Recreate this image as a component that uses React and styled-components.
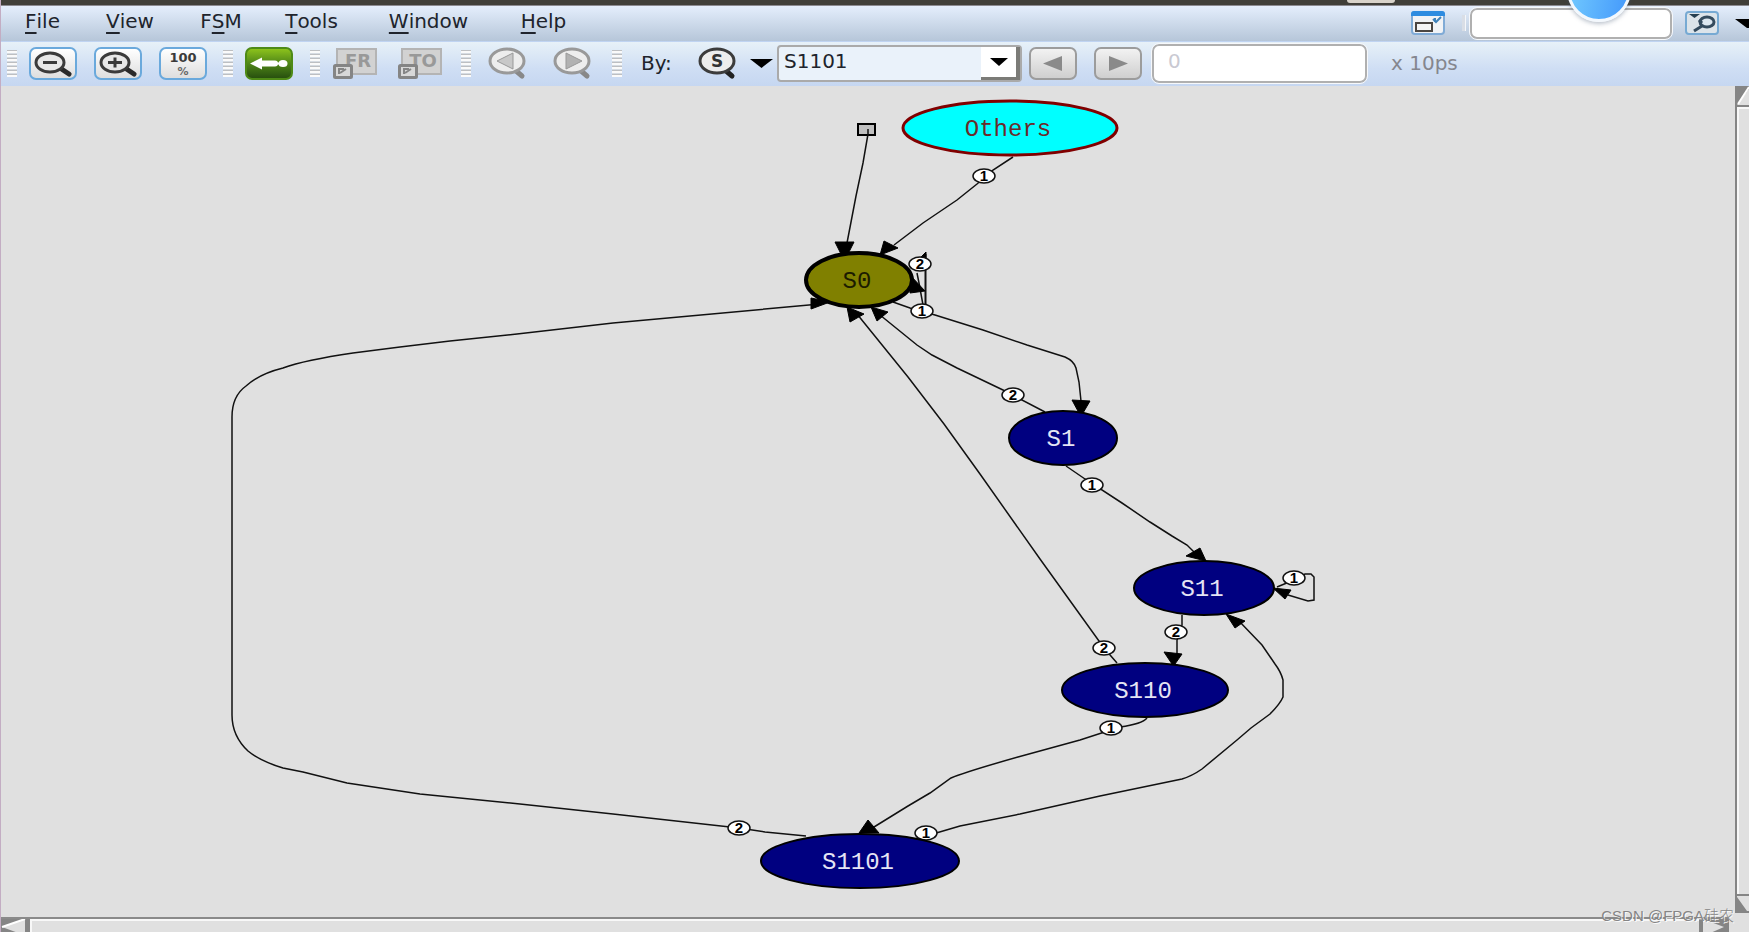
import React from 'react';
import styled, { createGlobalStyle } from 'styled-components';

const Global = createGlobalStyle`
  * { box-sizing: border-box; }
  html, body { margin: 0; }
  body { font-family: "DejaVu Sans", sans-serif; font-size: 20px; color: #20242c; }
`;

const Window = styled.div`
  position: relative;
  display: flex;
  flex-direction: column;
  height: 100vh;
  overflow: hidden;
  background: #e0e0e0;
  border-left: 1px solid #c3adc3;
`;
const DesktopStrip = styled.div`
  flex: none;
  height: 6px;
  display: flex;
  justify-content: flex-end;
  background: #403f39;
  border-bottom: 1px solid #8b8a90;
`;
const StripTab = styled.span`
  width: 48px;
  height: 3px;
  margin-right: 354px;
  border-radius: 0 0 4px 4px;
  background: #d8d3ca;
`;
const MenuBar = styled.header`
  flex: none;
  height: 36px;
  display: flex;
  align-items: center;
  justify-content: space-between;
  padding-left: 19px;
  background: linear-gradient(#e4eefc, #b6c6d9);
  border-bottom: 1px solid #c0d4f2;
`;
const Menus = styled.nav`
  display: grid;
  grid-template-columns: 45px 66px 52px 65px 105px 61px;
  column-gap: 32px;
`;
const MenuButton = styled.button`
  display: flex;
  justify-content: center;
  padding: 0 0 6px;
  border: 0;
  background: none;
  font: inherit;
  line-height: 24px;
  color: inherit;
  white-space: pre;
`;
const Mnemonic = styled.span`
  text-decoration: underline;
  text-decoration-thickness: 2px;
  text-underline-offset: 4px;
`;
const SearchTools = styled.div`
  display: flex;
  align-items: center;
  align-self: stretch;
  padding-bottom: 1px;
  overflow: hidden;
`;
const PlainButton = styled.button`
  flex: none;
  display: flex;
  padding: 0;
  border: 0;
  background: none;
  margin-left: ${(p) => p.$gap || 0}px;
`;
const Divider = styled.span`
  width: 4px;
  height: 16px;
  margin: 0 4px 0 17px;
  background: #d9dee6;
  border-right: 1px solid #f5f7fa;
`;
const Field = styled.input`
  flex: none;
  width: ${(p) => p.$width}px;
  height: ${(p) => p.$height}px;
  padding: 0 14px 4px;
  border: 2px solid #b0b0b0;
  border-radius: 7px;
  outline: 1px solid #f6f8fb;
  background: #fff;
  font: inherit;
  color: #c9c9d2;
`;
const ToolBar = styled.div`
  flex: none;
  height: 44px;
  display: flex;
  align-items: center;
  padding: 0 0 2px 6px;
  white-space: nowrap;
  background: linear-gradient(#e7f1f8, #cfdef4 60%, #c6d7f1);
`;
const Group = styled.div`
  display: flex;
  align-items: center;
  gap: ${(p) => p.$gap || 17}px;
  margin-right: ${(p) => p.$after || 0}px;
`;
const Grip = styled.span`
  flex: none;
  width: 10px;
  height: 27px;
  margin-right: ${(p) => p.$after}px;
  background: repeating-linear-gradient(#bdbfc2 0 1px, #fafafa 1px 3px, #d5dbe2 3px 4px);
`;
const ToolButton = styled.button`
  flex: none;
  display: flex;
  align-items: center;
  justify-content: center;
  width: 48px;
  height: 33px;
  padding: 0;
  border: 2px solid ${(p) => (p.$grey ? '#9c9c9c' : '#6aa9dc')};
  border-radius: 7px;
  background: ${(p) => (p.$grey ? 'linear-gradient(#f2f2f2, #cfcfcf)' : 'linear-gradient(#ffffff, #dedede)')};
`;
const RunButton = styled(ToolButton)`
  border-color: #4e8a16;
  background: linear-gradient(#8cc21c, #4f8618 50%, #28500f);
`;
const ByLabel = styled.label`
  width: 40px;
  margin-right: 17px;
`;
const Combo = styled.div`
  flex: none;
  display: flex;
  width: 245px;
  height: 37px;
  margin: 0 7px 0 4px;
  border: 2px solid #aaa;
  border-radius: 4px;
  background: #eaf2fa;
`;
const ComboSelect = styled.select`
  flex: 1;
  appearance: none;
  padding: 0 0 4px 5px;
  border: 0;
  background: none;
  font: inherit;
  color: inherit;
`;
const ComboArrow = styled.span`
  width: 39px;
  display: flex;
  align-items: center;
  justify-content: center;
  background: #fff;
  border: solid #7b7b77;
  border-width: 0 4px 3px 0;
  pointer-events: none;
`;
const Unit = styled.span`
  margin-left: 24px;
  color: #85868e;
`;
const Viewport = styled.main`
  flex: 1;
  min-height: 0;
  display: grid;
  grid-template-columns: minmax(0, 1fr) 14px;
`;
const Diagram = styled.svg`
  display: block;
  width: 100%;
  height: 100%;
  min-height: 0;
  font-family: "Liberation Mono", monospace;
  font-size: 24px;
  text-anchor: middle;
`;
const VScroll = styled.div`
  display: flex;
  flex-direction: column;
  margin-bottom: 4px;
  border-left: 2px solid #858585;
  overflow: hidden;
`;
const VThumb = styled.div`
  flex: 1;
  border: solid #858585;
  border-width: 2px 0;
  box-shadow: inset 2px 2px #f8f8f8;
`;
const HScroll = styled.div`
  flex: none;
  display: flex;
  height: 15px;
  margin-right: 20px;
  border-top: 2px solid #8a8a8a;
  overflow: hidden;
`;
const HThumb = styled.div`
  flex: 1;
  border: solid #858585;
  border-width: 0 4px 0 2px;
  box-shadow: inset 2px 2px #f8f8f8;
`;
const Bubble = styled.div`
  position: absolute;
  top: -42px;
  right: 118px;
  width: 64px;
  height: 64px;
  border: 3px solid #f3f8fd;
  border-radius: 50%;
  background: linear-gradient(100deg, #74ccff, #4398fb);
  box-shadow: 0 2px 4px rgba(60, 80, 110, 0.35);
`;
const Watermark = styled.div`
  position: absolute;
  right: 15px;
  bottom: 6px;
  font: 300 15px/20px "Liberation Sans", "Noto Sans CJK SC", sans-serif;
  color: #858585;
  text-shadow: 1px 1px #fafafa;
`;

function Caret({ w = 24, h = 9 }) {
  return (
    <svg width={w} height={h} viewBox="0 0 24 9" preserveAspectRatio="none">
      <path d="M0 0H24L12 9Z" fill="#000" />
    </svg>
  );
}

function ZoomIcon({ plus }) {
  return (
    <svg width="40" height="27" viewBox="0 0 40 27">
      <path d="M27 18L36 24" stroke="#2a2a2a" strokeWidth="5" strokeLinecap="round" />
      <ellipse cx="17" cy="12.500" rx="14" ry="9.500" fill="#e8e8e8" stroke="#3b3b3b" strokeWidth="3" />
      <path d={plus ? 'M10 12.500H24M17 7.500V17.500' : 'M10 12.500H24'} stroke="#3b3b3b" strokeWidth="3" />
    </svg>
  );
}

function PercentIcon() {
  return (
    <svg width="40" height="29" viewBox="0 0 40 29" fontFamily="DejaVu Sans" textAnchor="middle">
      <text x="20" y="13" fontSize="13" fontWeight="bold" fill="#3a3a3a">100</text>
      <text x="20" y="26" fontSize="11" fontWeight="bold" fill="#6a6a6a">%</text>
    </svg>
  );
}

function GoToIcon({ label }) {
  return (
    <svg width="44" height="32" viewBox="0 0 44 32">
      <rect x="4" y="2" width="39" height="25" fill="#d2d2d2" stroke="#b4b4b4" strokeWidth="2" />
      <text x="25" y="20" fontFamily="DejaVu Sans" fontSize="18" fontWeight="bold" fill="#999" textAnchor="middle">{label}</text>
      <rect x="1.500" y="18.500" width="17" height="12" rx="1" fill="#d8d8d8" stroke="#858585" strokeWidth="3" />
      <path d="M6 27V22H11M7 26L13 22" stroke="#858585" strokeWidth="2" fill="none" />
    </svg>
  );
}

function LensIcon({ kind }) {
  const dark = kind === 'state';
  const ink = dark ? '#3c3c3c' : '#999';
  return (
    <svg width="39" height="33" viewBox="0 0 39 33">
      <path d="M27 23L34 29" stroke={dark ? '#222' : '#888'} strokeWidth="5" strokeLinecap="round" />
      <ellipse cx="19" cy="14" rx="17" ry="12" fill="#ededed" stroke={ink} strokeWidth="3" />
      {kind === 'back' && <path d="M25 6V22L9 14Z" fill="#c8c8c8" stroke="#999" />}
      {kind === 'forward' && <path d="M13 6V22L29 14Z" fill="#b2b2b2" stroke="#999" />}
      {dark && <text x="19" y="20" fontFamily="DejaVu Sans" fontSize="17" fontWeight="bold" fill="#333" textAnchor="middle">S</text>}
    </svg>
  );
}

function RunIcon() {
  return (
    <svg width="38" height="13" viewBox="0 0 38 13">
      <path d="M0 6.500L12 0.500V3.500H25Q28 3.500 28 6.500T25 9.500H12V12.500Z" fill="#fff" />
      <ellipse cx="33" cy="6.500" rx="4.500" ry="3.500" fill="#fff" />
      <path d="M26 6.500H33" stroke="#fff" strokeWidth="2" />
    </svg>
  );
}

function StepIcon({ back }) {
  return (
    <svg width="20" height="15" viewBox="0 0 20 15">
      <path d={back ? 'M19 0V15L0 7.500Z' : 'M1 0V15L20 7.500Z'} fill="#8a8a8a" />
    </svg>
  );
}

function WindowIcon() {
  return (
    <svg width="34" height="24" viewBox="0 0 34 24">
      <rect x="1" y="1" width="32" height="22" rx="3" fill="#f1f3f6" stroke="#80abd6" strokeWidth="2" />
      <path d="M0 5V3Q0 0 3 0H31Q34 0 34 3V5Z" fill="#2e8ce0" />
      <rect x="5" y="12" width="16" height="8" fill="#f5f5f5" stroke="#4b4642" strokeWidth="2" />
      <path d="M22 8L25 11L30 6M24 7V11" fill="none" stroke="#3f82ba" strokeWidth="2" />
    </svg>
  );
}

function FindIcon() {
  return (
    <svg width="34" height="24" viewBox="0 0 34 24">
      <rect x="1" y="1" width="32" height="22" rx="3" fill="#dce4ea" stroke="#77aad3" strokeWidth="2" />
      <path d="M4 3H15L9.500 7Z" fill="#263f50" />
      <ellipse cx="22" cy="11" rx="7" ry="5" fill="#dce7f0" stroke="#344b5e" strokeWidth="3" />
      <path d="M17 15L9 20M14 9L17 12" stroke="#344b5e" strokeWidth="3" />
    </svg>
  );
}

const MENUS = [
  ['', 'F', 'ile'],
  ['', 'V', 'iew'],
  ['F', 'S', 'M'],
  ['', 'T', 'ools'],
  ['', 'W', 'indow'],
  ['', 'H', 'elp'],
];

const NODES = [
  { name: 'Others', x: 1010, y: 128, rx: 107, fill: '#00ffff', stroke: '#800000', text: '#6b2a2a', width: 3 },
  { name: 'S0', x: 859, y: 280, rx: 53, fill: '#808000', stroke: '#000', text: '#1c1c00', width: 4 },
  { name: 'S1', x: 1063, y: 438, rx: 54, fill: '#000080' },
  { name: 'S11', x: 1204, y: 588, rx: 70, fill: '#000080' },
  { name: 'S110', x: 1145, y: 690, rx: 83, fill: '#000080' },
  { name: 'S1101', x: 860, y: 861, rx: 99, fill: '#000080' },
];

const EDGES = [
  'M868 134L863 163L856 196L847 243',
  'M1013 157L993 170L977 184L957 200L923 223L894 245',
  'M893 302L910 308L935 315L983 330L1027 345L1065 357Q1074 361 1076 368L1079 382L1081 401',
  'M1045 412L1003 390L957 368L932 355L917 345L880 315',
  'M1117 663L1104 648L1040 559L980 474L944 424L908 377L857 314',
  'M1066 466L1085 479L1122 503L1150 522L1172 536L1187 545L1195 553',
  'M1277 587L1294 580L1305 574H1311L1314 577V600L1308 601L1288 595',
  'M1182 615V625L1177 640V655',
  'M1147 718Q1142 724 1120 727L1080 740L1018 757Q965 772 951 778L930 793L908 806L874 827',
  'M926 836L960 826L1020 814L1100 796L1182 779Q1192 776 1202 769L1237 740L1251 728L1270 714Q1280 704 1283 697V680Q1281 672 1275 664L1262 645L1238 620',
  'M806 836L765 832L739 828L613 814L520 804L420 794L347 783L303 772L283 768Q260 761 248 751Q232 736 232 715V417Q232 396 246 386Q259 374 283 368Q305 360 353 353L400 347L450 341L517 334L613 323L820 304',
  'M917 273L919 283L923 305',
];

const ARROWS = [
  'M835 242H854L848 254H841Z',
  'M884 241L898 248L880 255Z',
  'M1072 400L1090 401L1083 413H1079Z',
  'M871 307L888 312L877 321Z',
  'M847 307L864 314L850 322Z',
  'M1186 556L1200 548L1206 561Z',
  'M1273 588L1291 590L1285 599Z',
  'M1164 652L1182 654L1175 664H1172Z',
  'M868 820L879 833H859Z',
  'M1226 614L1245 621L1235 628Z',
  'M811 298V309L830 302Z',
  'M910 275L925 291L910 293Z',
  'M920 258L926 252V260Z',
];

const BADGES = [
  [984, 176, 1], [920, 264, 2], [922, 311, 1], [1013, 395, 2], [1092, 485, 1], [1294, 578, 1],
  [1176, 632, 2], [1104, 648, 2], [1111, 728, 1], [739, 828, 2], [926, 833, 1],
];

function StateNode({ node }) {
  return (
    <g>
      <ellipse cx={node.x} cy={node.y} rx={node.rx} ry="27" fill={node.fill} stroke={node.stroke || '#000'} strokeWidth={node.width || 2} />
      <text x={node.x - 2} y={node.y + 8} fill={node.text || '#e4e4f4'}>{node.name}</text>
    </g>
  );
}

function StateDiagram() {
  return (
    <Diagram viewBox="1 86 1734 831" role="img" aria-label="State transition diagram">
      <g fill="none" stroke="#111" strokeWidth="1.500">
        {EDGES.map((d) => <path key={d} d={d} />)}
        <path d="M925.500 254V305" strokeWidth="2" />
      </g>
      <rect x="858" y="124" width="17" height="11" fill="#c0c0c0" stroke="#000" strokeWidth="2" />
      <path d="M868 129V136" stroke="#111" strokeWidth="1.500" />
      {ARROWS.map((d) => <path key={d} d={d} fill="#000" stroke="#000" />)}
      {BADGES.map(([x, y, n]) => (
        <g key={`${x}-${y}`}>
          <ellipse cx={x} cy={y} rx="11" ry="7" fill="#fff" stroke="#111" strokeWidth="1.500" />
          <text x={x} y={y + 5} fontFamily="Liberation Sans" fontSize="15" fontWeight="bold" fill="#000">{n}</text>
        </g>
      ))}
      {NODES.map((n) => <StateNode key={n.name} node={n} />)}
    </Diagram>
  );
}

export default function App() {
  return (
    <Window>
      <Global />
      <DesktopStrip><StripTab /></DesktopStrip>
      <MenuBar>
        <Menus>
          {MENUS.map(([a, key, b]) => (
            <MenuButton key={a + key + b}>{a}<Mnemonic>{key}</Mnemonic>{b}</MenuButton>
          ))}
        </Menus>
        <SearchTools>
          <PlainButton aria-label="Undock window"><WindowIcon /></PlainButton>
          <Divider />
          <Field $width={202} $height={31} aria-label="Search" />
          <PlainButton $gap={13} aria-label="Find"><FindIcon /></PlainButton>
          <PlainButton $gap={16} aria-label="Find options">
            <svg width="14" height="9" viewBox="0 0 14 9"><path d="M0 0H14V9L12 9Z" /></svg>
          </PlainButton>
        </SearchTools>
      </MenuBar>
      <ToolBar>
        <Grip $after={12} />
        <Group $after={16}>
          <ToolButton aria-label="Zoom out"><ZoomIcon /></ToolButton>
          <ToolButton aria-label="Zoom in"><ZoomIcon plus /></ToolButton>
          <ToolButton aria-label="Zoom to 100%"><PercentIcon /></ToolButton>
        </Group>
        <Grip $after={12} />
        <Group $after={17}>
          <RunButton aria-label="Back"><RunIcon /></RunButton>
        </Group>
        <Grip $after={13} />
        <Group $gap={21} $after={19}>
          <PlainButton aria-label="From state"><GoToIcon label="FR" /></PlainButton>
          <PlainButton aria-label="To state"><GoToIcon label="TO" /></PlainButton>
        </Group>
        <Grip $after={17} />
        <Group $gap={26} $after={20}>
          <PlainButton aria-label="Search backward"><LensIcon kind="back" /></PlainButton>
          <PlainButton aria-label="Search forward"><LensIcon kind="forward" /></PlainButton>
        </Group>
        <Grip $after={19} />
        <ByLabel htmlFor="state">By:</ByLabel>
        <Group $gap={13}>
          <PlainButton aria-label="Search by state"><LensIcon kind="state" /></PlainButton>
          <PlainButton aria-label="Search modes"><Caret w={23} h={9} /></PlainButton>
        </Group>
        <Combo>
          <ComboSelect id="state" defaultValue="S1101">
            {['S0', 'S1', 'S11', 'S110', 'S1101'].map((s) => <option key={s}>{s}</option>)}
          </ComboSelect>
          <ComboArrow><Caret w={18} h={8} /></ComboArrow>
        </Combo>
        <Group $after={10}>
          <ToolButton $grey aria-label="Previous"><StepIcon back /></ToolButton>
          <ToolButton $grey aria-label="Next"><StepIcon /></ToolButton>
        </Group>
        <Field $width={215} $height={39} defaultValue="0" aria-label="Time" />
        <Unit>x 10ps</Unit>
      </ToolBar>
      <Viewport>
        <StateDiagram />
        <VScroll>
          <svg width="14" height="19" viewBox="0 0 14 19"><path d="M0 0H14L0 19Z" fill="#858585" /><path d="M1 18L12 1" stroke="#fff" strokeWidth="2" /></svg>
          <VThumb />
          <svg width="14" height="17" viewBox="0 0 14 17"><path d="M0 1L10 15H14V17H0Z" fill="#858585" /></svg>
        </VScroll>
      </Viewport>
      <HScroll>
        <svg width="27" height="15" viewBox="0 0 27 15"><path d="M0 0H27V15H0Z" fill="#858585" /><path d="M1 8L24 0V15H20Z" fill="#e0e0e0" /><path d="M1 8L24 0" stroke="#fff" strokeWidth="2" /></svg>
        <HThumb />
        <svg width="26" height="15" viewBox="0 0 26 15"><path d="M0 0H26V15H0Z" fill="#858585" /><path d="M0 0L21 8L5 15H0Z" fill="#e0e0e0" /></svg>
      </HScroll>
      <Bubble />
      <Watermark>CSDN @FPGA硅农</Watermark>
    </Window>
  );
}
